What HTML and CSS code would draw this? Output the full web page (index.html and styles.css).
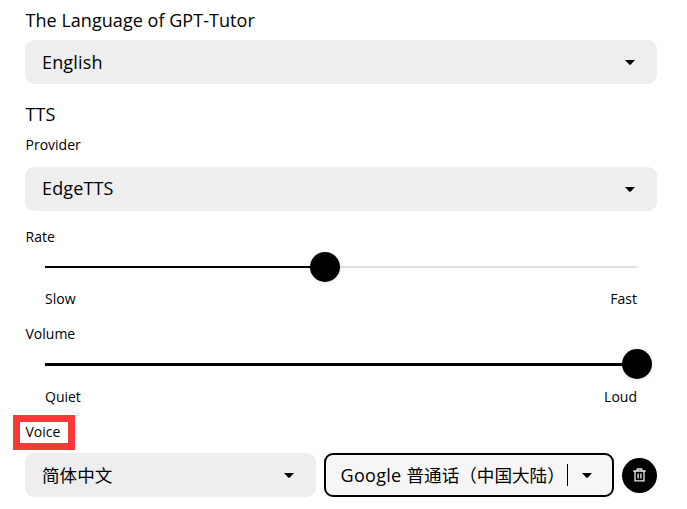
FILE: index.html
```
<!DOCTYPE html>
<html lang="en">
<head>
<meta charset="utf-8">
<title>GPT-Tutor Settings</title>
<link rel="stylesheet" href="styles.css">
</head>
<body>
<main class="settings">
  <h2 class="heading">The Language of GPT-Tutor</h2>
  <div class="select"><span class="value">English</span><svg class="caret" viewBox="0 0 10 5"><path d="M0 0h10L5.8 4.4q-.8.8-1.6 0z"/></svg></div>

  <h2 class="heading heading-tts">TTS</h2>
  <div class="label label-provider">Provider</div>
  <div class="select"><span class="value value-provider">EdgeTTS</span><svg class="caret" viewBox="0 0 10 5"><path d="M0 0h10L5.8 4.4q-.8.8-1.6 0z"/></svg></div>

  <div class="label label-rate">Rate</div>
  <div class="slider">
    <div class="track rate"><i class="thumb"></i></div>
    <div class="ends"><span>Slow</span><span>Fast</span></div>
  </div>

  <div class="label label-volume">Volume</div>
  <div class="slider">
    <div class="track volume"><i class="thumb"></i></div>
    <div class="ends"><span>Quiet</span><span>Loud</span></div>
  </div>

  <div class="label label-voice">Voice<i class="highlight"></i></div>
  <div class="voice-row">
    <div class="select"><span class="value chinese">简体中文</span><svg class="caret" viewBox="0 0 10 5"><path d="M0 0h10L5.8 4.4q-.8.8-1.6 0z"/></svg></div>
    <div class="select focused"><span class="value"><span class="brand">Google </span><span class="chinese">普通话（中国大陆）</span></span><i class="cursor"></i><svg class="caret" viewBox="0 0 10 5"><path d="M0 0h10L5.8 4.4q-.8.8-1.6 0z"/></svg></div>
    <button class="delete" aria-label="Delete"><svg viewBox="0 0 13 14"><path d="M.3 3h12.4M4.3 2.6V1h4.4v1.6M2 3.4V12.8h9V3.4M5.1 5.4v5M7.9 5.4v5"/></svg></button>
  </div>
</main>
</body>
</html>
```
FILE: styles.css
```
* { box-sizing: border-box; }
body {
  margin: 0;
  background: #fff;
  color: #000;
  font-family: "Open Sans", "Noto Sans CJK SC", sans-serif;
  font-size: 18px;
}
.settings { width: 632px; margin-left: 25px; padding-top: 8px; }
.heading { margin: 0 0 8px; padding-left: .5px; height: 24px; line-height: 24px; font-size: 18px; font-weight: 400; letter-spacing: .04px; white-space: nowrap; }
.heading-tts { margin: 18px 0 8px; }
.label { height: 20px; padding-left: .5px; line-height: 20px; font-size: 14px; }
.heading-tts + .label-provider { margin: 9px 0 12px; }
.select {
  display: flex;
  align-items: center;
  height: 44px;
  padding: 0 22px 0 17px;
  border-radius: 9px;
  background: #eee;
  white-space: nowrap;
}
.value { line-height: 24px; letter-spacing: .15px; }
.value-provider { margin-bottom: 2px; }
.chinese { font-size: 17.6px; letter-spacing: 0; }
.caret { width: 10px; height: 5px; margin-left: auto; margin-top: 1px; flex: none; }
.label-rate { margin-top: 16px; }
.slider { margin: 0 20px; }
.track { position: relative; height: 2px; background: #e2e2e2; }
.rate { margin-top: 19px; background: linear-gradient(to right, #000 280px, #e2e2e2 280px); }
.volume { margin-top: 19px; height: 3px; background: #000; }
.thumb {
  position: absolute;
  top: 50%;
  left: 280px;
  width: 30px;
  height: 30px;
  margin: -15px 0 0 -15px;
  border-radius: 50%;
  background: #000;
  box-shadow: 0 1px 4px rgba(0, 0, 0, .12);
}
.volume .thumb { top: 1px; left: 591.5px; }
.ends { display: flex; justify-content: space-between; margin-top: 21px; height: 20px; line-height: 20px; font-size: 14px; }
.label-volume { margin-top: 15px; }
.label-voice { position: relative; margin-top: 15px; }
.highlight { position: absolute; left: -12px; top: -7px; width: 62px; height: 35px; border: 7px solid #fb3838; }
.voice-row { display: grid; grid-template-columns: 291px 290px 35px; gap: 8px; align-items: center; margin-top: 11px; }
.focused { border: 2px solid #000; background: #f6f6f6; padding: 0 20px 0 14.5px; }
.brand { letter-spacing: .3px; }
.cursor { width: 1px; height: 22px; margin-left: 2px; background: #000; }
.delete {
  display: flex;
  align-items: center;
  justify-content: center;
  width: 35px;
  height: 35px;
  margin: 0;
  padding: 0;
  border: 0;
  border-radius: 50%;
  background: #000;
}
.delete svg { width: 13px; height: 14px; fill: none; stroke: #eee; stroke-width: 1.3; }
```
